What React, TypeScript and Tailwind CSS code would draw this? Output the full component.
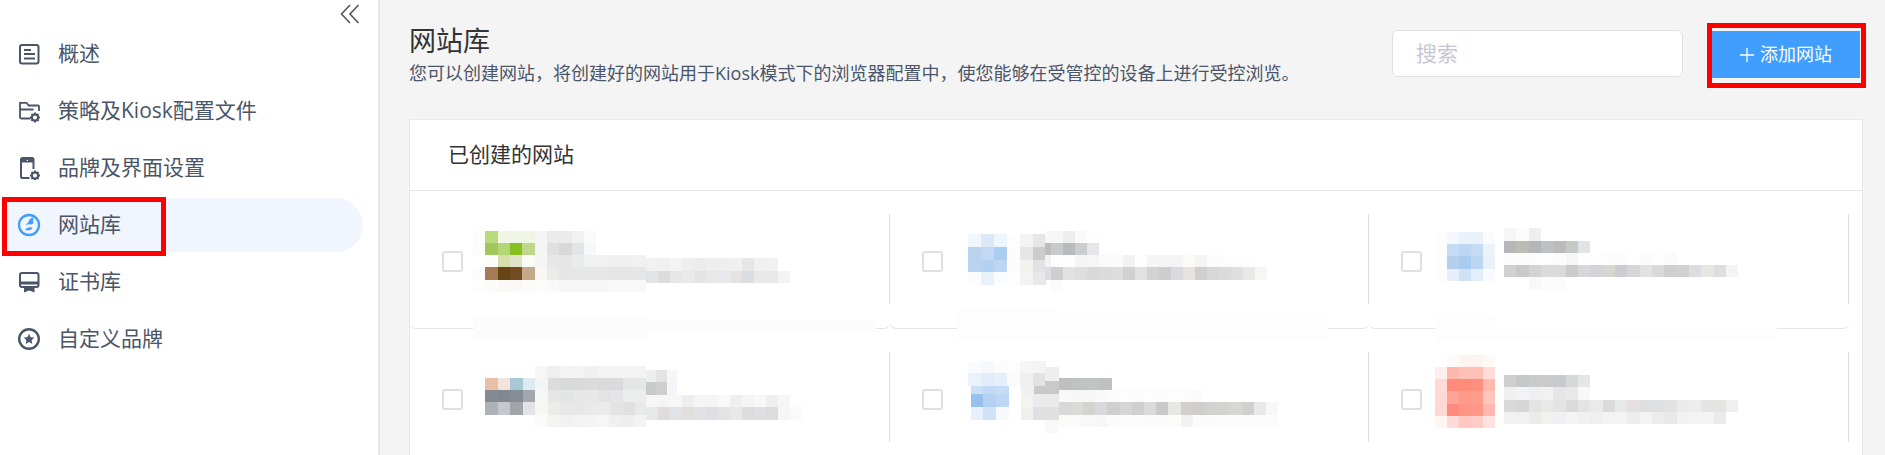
import type { ReactNode } from "react";

type Strip = [number, number, number, number, string[]];

// mosaic blocks, coordinates measured at 3x from each column's origin
const ORIGINS = [
  [400, 200],
  [900, 200],
  [1385, 200],
];

const SITES: { col: number; row: number; strips: Strip[] }[] = [
  {
    col: 0,
    row: 0,
    strips: [
      [219, 352, 519, 68, ["#fcfcfc"]],
      [738, 360, 690, 40, ["#fcfcfc"]],
      [219, 93, 37, 36, ["#fcfcfa", "#b9db7d", "#eff6e3", "#eff6e3", "#eff6e3", "#f4f5f4", "#eaebeb", "#eaebeb", "#f0f1f1", "#fafafa"]],
      [219, 129, 37, 36, ["#fcfcfb", "#a2c75c", "#b3d676", "#86bf1f", "#bcd888", "#f4f5f4", "#e0e0e0", "#d8d8d8", "#e3e4e6", "#f6f7f9"]],
      [219, 165, 37, 36, ["#ffffff", "#fdfdfb", "#d5dfaa", "#e0e2c8", "#f9fbf5", "#f4f5f4", "#e8e7e6", "#e6e6e6", "#eaebed", "#f1f3f2", "#f1f1f1", "#f0f0f0", "#f0f0f0", "#f0f2f2"]],
      [219, 201, 37, 39, ["#fdfcfa", "#a67a54", "#654515", "#744a22", "#c3a88a", "#f8f7f5", "#ecebe9", "#e6e6e6", "#e6e8e8", "#e6e7e7", "#e6e7e6", "#e4e5e5", "#e4e5e5", "#e5e6e7"]],
      [219, 240, 37, 36, ["#fdfdfc", "#fcfbf9", "#faf9f6", "#faf9f6", "#fcfbfa", "#fcfcfa", "#fafaf8", "#f7f7f7", "#f7f7f7", "#f7f7f7", "#f7f7f7", "#f8f8f8", "#f8f8f8", "#f8f8f8"]],
      [738, 174, 36, 39, ["#f1f1f1", "#f0f0f0", "#f4f4f4", "#eeeeee", "#ececeb", "#eeeeee", "#eeeeee", "#f0f0ee", "#e6e6e6", "#f0f0f0", "#f1f1f1"]],
      [738, 213, 36, 36, ["#e3e4e6", "#dcdcdc", "#e6e8e8", "#e9e9e9", "#e4e4e3", "#e8e8e8", "#e8e9ec", "#e4e3e1", "#dcdde0", "#e9e9ea", "#e9e9e9", "#f3f3f3"]],
    ],
  },
  {
    col: 1,
    row: 0,
    strips: [
      [170, 330, 300, 90, ["#fdfdfd"]],
      [470, 352, 813, 68, ["#fdfdfd"]],
      [201, 102, 39, 39, ["#f0f6fc", "#dbe8f8", "#eff5fc", "#fdfdfe", "#f3f3f3", "#e6e6e6"]],
      [201, 141, 39, 39, ["#b8d3f0", "#c2d8f3", "#abcdf0", "#fdfdfe", "#e6e6e6", "#cbcccc"]],
      [201, 180, 39, 36, ["#b8d4f1", "#b3d1f2", "#bdd6f2", "#fdfdfe", "#f1f2ee", "#e2e2e2"]],
      [201, 216, 39, 39, ["#fafcff", "#e9f1fb", "#fbfcff", "#fdfdfe", "#f3f4f1", "#e8e8e8"]],
      [432, 93, 18, 36, ["#f7f7f7"]],
      [450, 93, 36, 36, ["#f7f7f7", "#ecefed", "#f8f9f8", "#fdfefe"]],
      [432, 129, 18, 36, ["#bebdba"]],
      [450, 129, 36, 36, ["#c8cace", "#b9baba", "#cccdcf", "#e5e6e8"]],
      [432, 165, 18, 36, ["#f0f2f4"]],
      [450, 165, 36, 36, ["#fdfdfd", "#fcfdfc", "#f5f6f3", "#f6f6f4", "#fbfbfb", "#fbfbfb", "#f2f2f2", "#fdfdfd", "#f5f5f5", "#f5f5f3", "#f4f4f4", "#fbfaf7", "#f4f4f4", "#fcfcfc", "#fdfdfd", "#fdfdfd", "#fdfdfd"]],
      [432, 201, 18, 39, ["#dcdde2"]],
      [450, 201, 36, 39, ["#d0cecf", "#dfe2df", "#dededd", "#d9dad8", "#dadcdb", "#dddddd", "#d2d0d1", "#dfe1e3", "#d4d2d3", "#cccdcf", "#d9dade", "#e6e3df", "#cfcfce", "#d8d7d7", "#dadbdc", "#dfdfdf", "#e8e8e5", "#f5f7f5"]],
      [450, 240, 36, 36, ["#fbfbfb"]],
    ],
  },
  {
    col: 2,
    row: 0,
    strips: [
      [150, 352, 180, 73, ["#fdfdfd"]],
      [330, 380, 846, 33, ["#fdfdfd"]],
      [150, 96, 36, 36, ["#fdfdfd", "#f4f8fd", "#e9f2fb", "#e9f2fb", "#f9fbfd"]],
      [150, 132, 36, 36, ["#fdfdfd", "#c5dbf3", "#bdd7f2", "#c3dbf3", "#edf3fb"]],
      [150, 168, 36, 39, ["#fdfdfd", "#b4cfee", "#a9ccf0", "#bcd5f1", "#e9f1fa"]],
      [150, 207, 36, 36, ["#fdfdfd", "#e6eefa", "#cfe2f7", "#e4eefa", "#f8fafd"]],
      [357, 84, 37, 39, ["#f6f6f6", "#fcfcfc", "#eeeff1"]],
      [357, 123, 37, 36, ["#b5b7b8", "#bcbcb7", "#b4b7b8", "#bfc0c3", "#babbbd", "#c7c9c7", "#e0e4e6"]],
      [357, 159, 37, 36, ["#fcfcfc", "#fcfcfc", "#fdfdfd", "#fdfdfd", "#fbfbfb", "#f6f6f6", "#fefefe", "#fefefe", "#fdfdfb", "#fcfcfc", "#fefefe", "#fafafa", "#fdfdfd", "#fbfbfb"]],
      [357, 195, 37, 36, ["#d1d1d1", "#c8c9c9", "#d3d3d0", "#dbdbdb", "#dbdad8", "#cbccc9", "#d7d8db", "#d4d4d8", "#d7d7d2", "#cbcdd0", "#d4d7d6", "#e0e3e1", "#d9d9da", "#cfced1", "#d1d1d1", "#dbdde0", "#e6e6e3", "#dcdddc", "#f4f4f4"]],
      [432, 231, 37, 39, ["#f8f8f8", "#fcfcfc", "#fbfcfb"]],
    ],
  },
  {
    col: 0,
    row: 1,
    strips: [
      [405, 498, 37, 36, ["#f6f6f6", "#efefef", "#f3f3f3", "#f3f4f4", "#f0f0f0", "#f2f3f3", "#f3f3f3", "#f2f3f3", "#f3f3f3"]],
      [255, 534, 37.5, 36, ["#e9bfa8", "#f3e3dc", "#a8c8d6", "#deebf2", "#f4f4f4", "#dcdcdc", "#d8d9da", "#d9dadb", "#dcdcdc", "#dadadd", "#d9dadb", "#e4e6e6", "#e5e6e6"]],
      [255, 570, 37.5, 36, ["#838a93", "#818891", "#858d95", "#a4a8ae", "#f6f6f6", "#e6e6e5", "#e3e5e5", "#e6e7e8", "#e8e8e8", "#e3e3e4", "#e4e5e6", "#ebeded", "#eceded"]],
      [255, 606, 37.5, 39, ["#aeb1b6", "#c5c8cc", "#a1a5ab", "#e2e3e5", "#f6f6f5", "#ebebea", "#e7e7e7", "#e7e8ea", "#eaeaea", "#ebebe9", "#e4e4e4", "#e1e1e1", "#e8e9e9"]],
      [405, 645, 37, 36, ["#fafafa", "#f4f4f3", "#f1f1f1", "#f2f3f3", "#f4f4f4", "#f6f6f6", "#f0f0f0", "#eeeeee", "#f3f3f3"]],
      [738, 510, 31, 36, ["#eceef0", "#e4e3e2", "#f5f7fa"]],
      [738, 546, 31, 39, ["#c8c9cb", "#d0cfce", "#f3f5f8"]],
      [738, 585, 36, 36, ["#f6f6f6", "#f5f5f5", "#f6f7f7", "#eeeeee", "#f5f5f5", "#f5f5f4", "#f9f9f9", "#efefef", "#f4f4f4", "#f8f8f8", "#efefef", "#f5f6f8"]],
      [738, 621, 36, 39, ["#e6e8ea", "#e0dcdc", "#e0e4e8", "#e2e0de", "#e0e2e5", "#dddfe2", "#e3e3e5", "#e8e8e8", "#dddddd", "#dfe0e3", "#dddddd", "#f6f6f6", "#fafafa"]],
    ],
  },
  {
    col: 1,
    row: 1,
    strips: [
      [201, 483, 39, 36, ["#fafbfd", "#f6f9fc", "#fbfcfd", "#fdfdfd", "#f6f6f6", "#f4f4f4"]],
      [201, 519, 39, 39, ["#eaf2fb", "#e2edf9", "#e6eff9", "#f9fbfd", "#efefef", "#e2e2e2"]],
      [432, 501, 42, 42, ["#eeeeee"]],
      [210, 558, 38, 24, ["#cbe0f6", "#c3daf5", "#c6dcf5"]],
      [210, 582, 38, 39, ["#97c0ec", "#b5d2f2", "#bcd6f3"]],
      [210, 621, 38, 39, ["#e8f0fb", "#d0e2f6", "#f6f9fe"]],
      [360, 558, 39, 24, ["#f0f0f0", "#c9c9c9"]],
      [432, 543, 42, 39, ["#c8c9ca"]],
      [474, 534, 40, 36, ["#bfc0be", "#c0c3c4", "#c1c4c5", "#bfc1c1"]],
      [360, 582, 38, 39, ["#f3f3f0", "#e9eaeb", "#e9eaea"]],
      [360, 621, 38, 39, ["#f0f1ec", "#e0e0e2", "#e0e0e1"]],
      [432, 660, 42, 39, ["#f9f9f9"]],
      [474, 570, 36, 36, ["#f9f9f9", "#f7f7f7", "#f7f7f7", "#f9f9f9", "#fcfcfc", "#fdfdfd", "#fbfbfb", "#fdfdfd", "#fbfbfb", "#fdfdfd", "#fdfdfd", "#fbfbfb"]],
      [474, 606, 36.6, 39, ["#d8d8db", "#dcdad6", "#d3d3d0", "#d8d9dc", "#cfcfcf", "#d6d6d6", "#cfcfcf", "#dadada", "#c9c9c9", "#e6e6e3", "#d1d0cd", "#cfcecb", "#d2d3d0", "#d3d4d2", "#d7d7d6", "#d1d0cf", "#e8eae9", "#f7f7f7"]],
      [474, 645, 36.6, 36, ["#fafaf8", "#fafafa", "#f8f8f8", "#f7f7f7", "#fbfbfb", "#fcfcfc", "#fcfcfc", "#fbfbfb", "#fbfbfb", "#fcfcfa", "#f2f2f2", "#fbfbfb", "#fbfbfb", "#fcfcfc", "#fcfcfc", "#fcfcfc", "#fcfcfc", "#fcfcfc"]],
    ],
  },
  {
    col: 2,
    row: 1,
    strips: [
      [186, 465, 36, 36, ["#fdfbf9", "#fef3f0", "#fef3f0", "#fef9f7"]],
      [150, 501, 36, 36, ["#feeeec", "#ffb8ad", "#ffc0b7", "#ffc0b7", "#ffdcd7"]],
      [150, 537, 36, 36, ["#ffdad6", "#ff8c7a", "#ff8b79", "#ff8f7e", "#ffb9ae"]],
      [150, 573, 36, 39, ["#ffd9d5", "#ffa598", "#ff9a8b", "#ff9c8d", "#ffc6be"]],
      [150, 612, 36, 36, ["#ffd8d4", "#ff8b7d", "#ff9485", "#ff9889", "#ffb8b0"]],
      [150, 648, 36, 36, ["#fff6f4", "#ffdad6", "#ffc8c1", "#ffcdc7", "#ffe2df"]],
      [357, 525, 37, 36, ["#cfcfcf", "#c3c8c8", "#c9cacb", "#cacccb", "#c9cacf", "#d6d9d9", "#e5e6e8"]],
      [357, 561, 37, 39, ["#f0f0ee", "#f3f3f5", "#eeeff2", "#f1f1f1", "#e6e6e7", "#e8e8e8", "#f8f8f8"]],
      [357, 600, 37, 36, ["#d9d9d9", "#d6d6d6", "#e3e3e1", "#e7e9e9", "#e4e2e2", "#dadada", "#e3e5e5", "#eaeae8", "#dbdbdb", "#e6e8ea", "#e6e0e0", "#dfdfdf", "#dfe0e3", "#e2e2e2", "#ebebea", "#ededed", "#e4e4e2", "#e4e4e2", "#eef0ef"]],
      [357, 636, 37, 36, ["#f1f1f1", "#f1f1f1", "#ebebe9", "#f1f1ee", "#eef0f4", "#f4f4f3", "#f1f1f2", "#efefef", "#f2f3f3", "#f2f4f4", "#efedeb", "#f3f3f3", "#ececec", "#e8e8e8", "#f1f2f2", "#f2f3f3", "#f4f4f4", "#ebebeb"]],
    ],
  },
];

function Gear({ x, y }: { x: number; y: number }) {
  return (
    <g transform={`translate(${x} ${y})`}>
      <circle r="3.1" fill="none" stroke="#4b5568" strokeWidth="2" />
      <path d="M-1-5h2v2h-2zM-1 3h2v2h-2zM-5-1h2v2h-2zM3-1h2v2h-2z" fill="#4b5568" />
      <path d="M-1-5h2v2h-2zM-1 3h2v2h-2zM-5-1h2v2h-2zM3-1h2v2h-2z" fill="#4b5568" transform="rotate(45)" />
    </g>
  );
}

const ICONS: Record<string, ReactNode> = {
  overview: (
    <>
      <rect x="3" y="3" width="18.5" height="18.5" rx="2" fill="none" stroke="#4b5568" strokeWidth="2" />
      <path d="M7 8h7M7 12h11M7 16.5h11" stroke="#4b5568" strokeWidth="2" fill="none" />
    </>
  ),
  policy: (
    <>
      <path
        d="M13.5 19.5H4.5a1.5 1.5 0 0 1-1.5-1.5V3.8h6.5l2.2 2.7h9.3a1 1 0 0 1 1 1V12M3 10.5h13.5"
        fill="none"
        stroke="#4b5568"
        strokeWidth="1.8"
      />
      <Gear x={18} y={18.5} />
    </>
  ),
  brand: (
    <>
      <path d="M12.5 22H5.5a1.5 1.5 0 0 1-1.5-1.5V3.5A1.5 1.5 0 0 1 5.5 2h9.5a1.5 1.5 0 0 1 1.5 1.5V13" fill="none" stroke="#4b5568" strokeWidth="2" />
      <path d="M4.5 2.5H16v4H4.5z" fill="#4b5568" />
      <circle cx="10.3" cy="4.4" r="0.7" fill="#ffffff" />
      <Gear x={18} y={19.5} />
    </>
  ),
  globe: (
    <>
      <circle cx="12" cy="12" r="10" fill="none" stroke="#409eff" strokeWidth="2.3" />
      <path
        d="M16 4.5c1 2-.5 3 .3 4.5.4 1.5-1.5 3-3.3 2.5-1.5-.5-3 .5-4.5.2 1-1 2.500-1.500 3-3 .5-2 2.500-4 4.500-4.200zM8 17c1.500-2 4-3.500 7-2.500 1 .5-.5 2-2 2.500-1.500.5-3 .2-5 0z"
        fill="#409eff"
      />
    </>
  ),
  cert: (
    <>
      <rect x="3" y="3" width="18.5" height="14" rx="2" fill="none" stroke="#4b5568" strokeWidth="2" />
      <path d="M3 11.5h18.5v3H3z" fill="#4b5568" />
      <path d="M7 16h10.5v6.5l-5.25-2-5.25 2z" fill="#4b5568" />
    </>
  ),
  custom: (
    <>
      <circle cx="12" cy="12" r="9.8" fill="none" stroke="#4b5568" strokeWidth="2.4" />
      <path d="M12 6.8l1.6 3.400 3.700.4-2.700 2.600.7 3.700-3.300-1.800-3.300 1.800.7-3.700-2.700-2.600 3.700-.4z" fill="#4b5568" />
    </>
  ),
};

const NAV = [
  { key: "overview", label: "概述" },
  { key: "policy", label: "策略及Kiosk配置文件" },
  { key: "brand", label: "品牌及界面设置" },
  { key: "globe", label: "网站库", active: true },
  { key: "cert", label: "证书库" },
  { key: "custom", label: "自定义品牌" },
];

function Sidebar() {
  return (
    <aside className="flex w-[380px] shrink-0 flex-col border-r-2 border-[#e8e8e8] bg-white">
      <div className="flex h-[27px] justify-end pr-[18px] pt-[4px]">
        <svg viewBox="0 0 20 20" className="h-5 w-5" fill="none" stroke="#555555" strokeWidth="1.6">
          <path d="M10 1L1.5 10L10 19M18.5 1L10 10L18.5 19" />
        </svg>
      </div>
      <nav className="flex flex-col gap-[3px] pr-[15px]">
        {NAV.map((item) => (
          <div
            key={item.key}
            className={`relative ml-[5px] flex h-[54px] items-center gap-[17px] pl-[12px] text-[21px] text-[#4b5568] ${
              item.active ? "rounded-r-full bg-[#f0f5fe]" : ""
            }`}
          >
            <svg viewBox="0 0 24 24" className="h-6 w-6 shrink-0">
              {ICONS[item.key]}
            </svg>
            <span>{item.label}</span>
            {item.active && (
              <span className="absolute -bottom-[4px] -top-[1px] -left-[3px] w-[164px] border-[5px] border-[#ff0000]" />
            )}
          </div>
        ))}
      </nav>
    </aside>
  );
}

function SiteCell({ col, row, strips }: { col: number; row: number; strips: Strip[] }) {
  const [ox, oy] = ORIGINS[col];
  const cellX = 410 + 479.5 * col;
  const cellY = 191 + 138 * row;
  return (
    <div className="relative rounded-b-[6px] border-b border-[#e4e4e4] pb-[24px] pt-[23px]">
      <div className="flex h-[90px] items-center border-r border-[#dedede] pl-[32px] pt-[5px]">
        <span className="h-[21px] w-[21px] rounded-[3px] border-2 border-[#dfe0e6] bg-white" />
      </div>
      <svg className="pointer-events-none absolute left-0 top-0 h-full w-full overflow-visible" shapeRendering="crispEdges">
        {strips.flatMap(([x, y, w, h, colors], s) =>
          colors.map((fill, i) => (
            <rect
              key={`${s}-${i}`}
              x={ox + (x + i * w) / 3 - cellX}
              y={oy + y / 3 - cellY}
              width={w / 3}
              height={h / 3}
              fill={fill}
            />
          )),
        )}
      </svg>
    </div>
  );
}

export default function App() {
  return (
    <div className="flex h-[455px] w-[1885px] overflow-hidden bg-[#f4f4f4] font-['Open_Sans','Noto_Sans_CJK_SC',sans-serif]">
      <Sidebar />
      <main className="min-w-0 flex-1 pl-[29px] pr-[22px]">
        <header className="flex h-[119px] items-start justify-between">
          <div className="pt-[22px]">
            <h1 className="text-[27px] font-normal leading-[38px] text-[#333333]">网站库</h1>
            <p className="text-[18px] leading-[26px] text-[#4b5568]">
              您可以创建网站，将创建好的网站用于Kiosk模式下的浏览器配置中，使您能够在受管控的设备上进行受控浏览。
            </p>
          </div>
          <div className="flex items-start pr-[3px] pt-[30px]">
            <div className="flex h-[47px] w-[291px] items-center rounded-[6px] border border-[#dfe0e6] bg-white pl-[23px] text-[21px] text-[#c5c8d0]">
              搜索
            </div>
            <div className="relative ml-[29px] mt-[1px]">
              <button
                type="button"
                className="flex h-[47px] w-[148px] items-center justify-center gap-[6px] bg-[#409eff] text-[18px] text-white"
              >
                <svg viewBox="0 0 14 14" className="h-[14px] w-[14px]" stroke="#ffffff" strokeWidth="1.3">
                  <path d="M7 0v14M0 7h14" />
                </svg>
                添加网站
              </button>
              <span className="absolute -bottom-[10px] -left-[5px] -right-[6px] -top-[8px] border-[5px] border-[#ff0000]" />
            </div>
          </div>
        </header>
        <section className="border border-[#e8e8e8] bg-white">
          <div className="flex h-[71px] items-center border-b border-[#e4e4e4] pl-[38px] text-[21px] text-[#333333]">
            已创建的网站
          </div>
          <div className="grid grid-cols-[repeat(3,479.5px)]">
            {SITES.map((site) => (
              <SiteCell key={`${site.row}-${site.col}`} {...site} />
            ))}
          </div>
        </section>
      </main>
    </div>
  );
}
